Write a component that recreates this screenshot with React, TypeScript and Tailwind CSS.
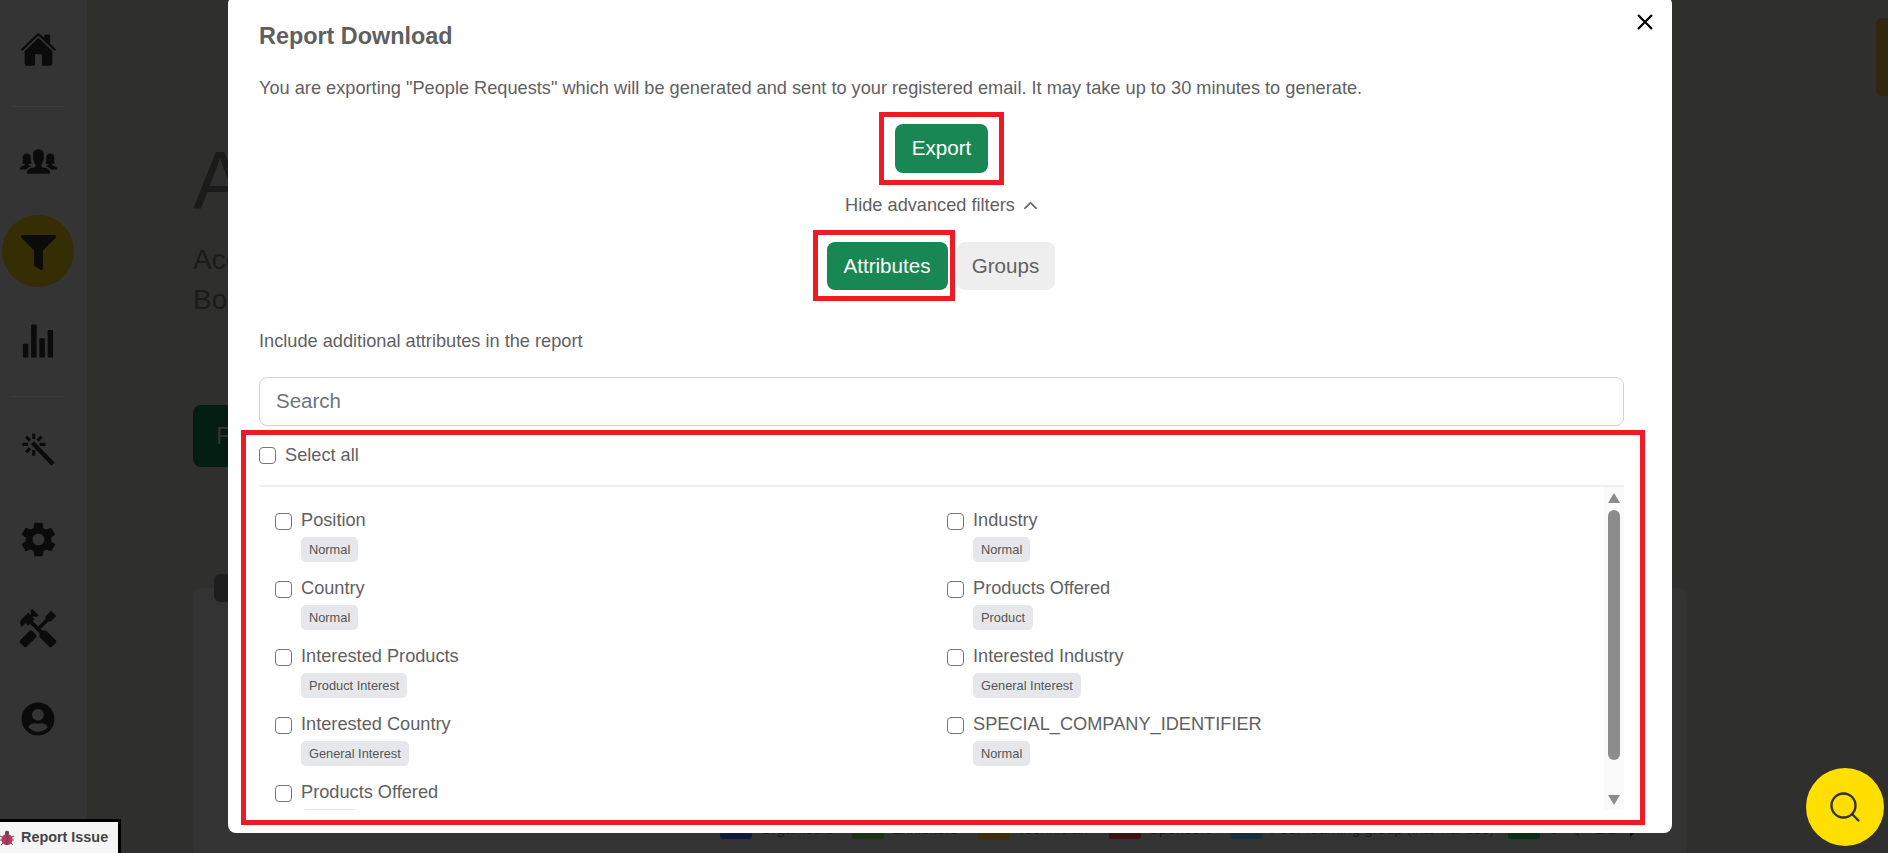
import { FaFilter, FaUserCircle } from 'react-icons/fa'
import { BsChevronUp, BsX } from 'react-icons/bs'
import { IoIosPeople, IoIosStats, IoMdColorWand, IoMdSettings } from 'react-icons/io'
import { IoHome } from 'react-icons/io5'
import { MdHandyman } from 'react-icons/md'
import { Search } from 'lucide-react'

const leftAttributes = [
  { name: 'Position', tag: 'Normal' },
  { name: 'Country', tag: 'Normal' },
  { name: 'Interested Products', tag: 'Product Interest' },
  { name: 'Interested Country', tag: 'General Interest' },
  { name: 'Products Offered', tag: 'Normal' },
]

const rightAttributes = [
  { name: 'Industry', tag: 'Normal' },
  { name: 'Products Offered', tag: 'Product' },
  { name: 'Interested Industry', tag: 'General Interest' },
  { name: 'SPECIAL_COMPANY_IDENTIFIER', tag: 'Normal' },
]

const legend = [
  { label: 'Organisers', color: 'bg-[#0f1a3e]', width: 'w-[132px]' },
  { label: 'Exhibitors', color: 'bg-[#1c3315]', width: 'w-[125px]' },
  { label: 'Technician', color: 'bg-[#3e2f0a]', width: 'w-[132px]' },
  { label: 'Sponsors', color: 'bg-[#3d1212]', width: 'w-[121px]' },
  { label: 'Peer-learning group (internal use)', color: 'bg-[#172e3c]', width: 'w-[278px]' },
]

function Checkbox() {
  return <span className="block w-[17px] h-[17px] shrink-0 rounded-[4px] border-[1.5px] border-[#767676] bg-white" />
}

function AttributeRow({ name, tag }: { name: string; tag: string }) {
  return (
    <div className="flex h-[68px] gap-[9px]">
      <div className="pt-[6px]">
        <Checkbox />
      </div>
      <div>
        <div className="text-[18.2px] leading-[27px] text-[#616161]">{name}</div>
        <span className="block w-fit mt-[3px] h-[25px] px-[8px] rounded-[5px] bg-[#e5e7eb] text-[12.8px] leading-[25px] text-[#555]">
          {tag}
        </span>
      </div>
    </div>
  )
}

function Sidebar() {
  return (
    <aside className="w-[87px] shrink-0 bg-[#343434] pr-[11px] pt-[4px] flex flex-col items-center text-[#0b0b0b]">
      <div className="h-[90px] flex items-center justify-center">
        <IoHome size={37} />
      </div>
      <div className="w-[52px] h-px bg-[#3c3c3c] mt-[12px] mb-[9px]" />
      <div className="h-[90px] flex items-center justify-center">
        <IoIosPeople size={43} />
      </div>
      <div className="h-[90px] flex items-center justify-center">
        <div className="w-[72px] h-[72px] rounded-full bg-[#352d04] flex items-center justify-center">
          <FaFilter size={35} className="mt-[2px]" />
        </div>
      </div>
      <div className="h-[90px] flex items-center justify-center">
        <IoIosStats size={44} />
      </div>
      <div className="w-[52px] h-px bg-[#3c3c3c] mt-[10px] mb-[7px]" />
      <div className="h-[90px] flex items-center justify-center">
        <IoMdColorWand size={43} />
      </div>
      <div className="h-[90px] flex items-center justify-center">
        <IoMdSettings size={41} />
      </div>
      <div className="h-[90px] flex items-center justify-center">
        <MdHandyman size={44} className="-scale-x-100" />
      </div>
      <div className="h-[90px] flex items-center justify-center">
        <FaUserCircle size={34} />
      </div>
    </aside>
  )
}

function BackPage() {
  return (
    <main className="flex-1 pl-[106px] pt-[135px] bg-[#2f2f2d] text-[#1b1b1b] overflow-hidden">
      <h1 className="text-[81px] leading-[90px]">Attendees</h1>
      <p className="mt-[15px] text-[28px] leading-[40px]">
        Access
        <br />
        Booths
      </p>
      <div className="mt-[85px] w-[140px] h-[62px] rounded-[8px] bg-[#041d12] text-[#333] text-[24px] leading-[62px] pl-[23px]">
        Filter
      </div>
      <div className="relative mt-[121px] w-[1493px] h-[400px] rounded-[8px] bg-[#333333] pl-[527px] pt-[231px]">
        <div className="absolute left-[21px] top-[-14px] w-[40px] h-[28px] rounded-[6px] bg-[#1e1e1e]" />
        <div className="flex items-center whitespace-nowrap text-[15px] leading-[20px] text-[#1b1b1b]">
          {legend.map((item) => (
            <div key={item.label} className={`flex items-center gap-[8px] ${item.width}`}>
              <span className={`w-[32px] h-[20px] rounded-[3px] ${item.color}`} />
              <span>{item.label}</span>
            </div>
          ))}
          <span className="w-[32px] h-[20px] rounded-[3px] bg-[#0d2e18]" />
          <span className="ml-[10px]">5</span>
          <span className="ml-[12px] w-0 h-0 border-y-[8px] border-y-transparent border-r-[9px] border-r-[#222]" />
          <span className="ml-[16px]">1/2</span>
          <span className="ml-[14px] w-0 h-0 border-y-[8px] border-y-transparent border-l-[9px] border-l-[#111]" />
        </div>
      </div>
    </main>
  )
}

export default function App() {
  return (
    <div className="relative w-[1888px] h-[853px] overflow-hidden flex font-['Liberation_Sans',sans-serif]">
      <Sidebar />
      <BackPage />

      <div className="absolute right-0 top-[18px] w-[12px] h-[78px] rounded-l-[6px] bg-[#32260f]" />

      <section className="absolute left-[228px] top-[-4px] w-[1444px] h-[837px] rounded-[8px] bg-white pl-[31px] pr-[48px] pt-[27px]">
        <button className="absolute right-[10px] top-[9px] text-black">
          <BsX size={34} />
        </button>
        <h2 className="text-[23.4px] leading-[26px] font-bold text-[#5f5f5f]">Report Download</h2>
        <p className="mt-[26px] text-[18.2px] leading-[27px] text-[#616161]">
          You are exporting "People Requests" which will be generated and sent to your registered email. It may take up to 30 minutes to generate.
        </p>
        <div className="mt-[22px] flex justify-center">
          <button className="w-[93px] h-[49px] rounded-[8px] bg-[#198754] text-white text-[20.6px]">Export</button>
        </div>
        <div className="mt-[19px] flex items-center justify-center gap-[8px] text-[18.2px] leading-[27px] text-[#616161]">
          <span>Hide advanced filters</span>
          <BsChevronUp size={15} strokeWidth={1} />
        </div>
        <div className="mt-[23px] pr-[2px] flex justify-center gap-[9px]">
          <button className="w-[121px] h-[48px] rounded-[8px] bg-[#198754] text-white text-[20.6px]">Attributes</button>
          <button className="w-[98px] h-[48px] rounded-[8px] bg-[#eeeeee] text-[#616161] text-[20.6px]">Groups</button>
        </div>
        <p className="mt-[38px] text-[18.2px] leading-[27px] text-[#616161]">Include additional attributes in the report</p>
        <div className="mt-[22px] h-[49px] rounded-[8px] border border-[#ced4da] px-[16px] text-[20.5px] leading-[45px] text-[#6c757d]">
          Search
        </div>
        <div className="mt-[20px] flex items-center gap-[9px] text-[18.2px] leading-[18px] text-[#616161]">
          <Checkbox />
          <span>Select all</span>
        </div>
        <div className="mt-[21px] h-[2px] bg-[#eceee8]" />
        <div className="relative h-[323px] overflow-hidden pt-[20px] pl-[16px]">
          <div className="grid grid-cols-[672px_1fr]">
            <div>
              {leftAttributes.map((item) => (
                <AttributeRow key={item.name} {...item} />
              ))}
            </div>
            <div>
              {rightAttributes.map((item) => (
                <AttributeRow key={item.name} {...item} />
              ))}
            </div>
          </div>
          <div className="absolute right-0 top-0 bottom-0 w-[20px] bg-[#fafafa] flex flex-col items-center pt-[6px]">
            <span className="w-0 h-0 border-x-[6px] border-x-transparent border-b-[10px] border-b-[#8c8c8c]" />
            <span className="mt-[7px] w-[12px] h-[250px] rounded-[6px] bg-[#8c8c8c]" />
            <span className="mt-[35px] w-0 h-0 border-x-[6px] border-x-transparent border-t-[10px] border-t-[#8c8c8c]" />
          </div>
        </div>

        {/* red annotation frames from the screenshot */}
        <div className="absolute left-[651px] top-[116px] w-[125px] h-[73px] border-[5px] border-[#ed1c24]" />
        <div className="absolute left-[585px] top-[234px] w-[142px] h-[71px] border-[5px] border-[#ed1c24]" />
        <div className="absolute left-[13px] top-[434px] w-[1404px] h-[395px] border-[5px] border-[#ed1c24]" />
      </section>

      <div className="absolute left-0 bottom-0 w-[121px] h-[34px] bg-[#f5f5f5] border-t-[3px] border-r-[3px] border-black flex items-center gap-[7px] text-[14.4px] font-bold text-[#444]">
        <svg width="14" height="16" viewBox="0 0 14 16" className="shrink-0">
          <circle cx="7" cy="9.500" r="5.500" fill="#c2305f" />
          <circle cx="7" cy="3" r="2.200" fill="#5a4a50" />
          <path d="M7 4v11M0 6l3 1.500M14 6l-3 1.500M0 10h2M12 10h2M1 15l2-2M13 15l-2-2" stroke="#5a4a50" strokeWidth="1" fill="none" />
        </svg>
        <span>Report Issue</span>
      </div>

      <button className="absolute left-[1806px] top-[768px] w-[78px] h-[78px] rounded-full bg-[#ffdf00] flex items-center justify-center text-[#333]">
        <Search size={36} strokeWidth={1.6} />
      </button>
    </div>
  )
}
